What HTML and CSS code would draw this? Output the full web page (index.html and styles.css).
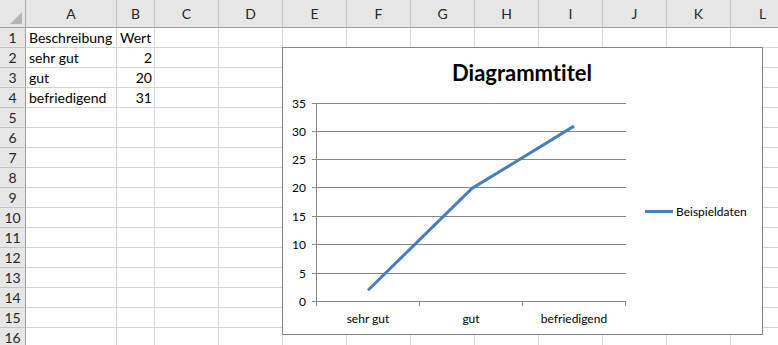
FILE: index.html
```html
<!DOCTYPE html>
<html lang="de">
<head>
  <meta charset="UTF-8">
  <title>Mappe1 - Diagramm</title>
  <link rel="stylesheet" href="styles.css">
</head>
<body>

  <div class="sheet">
    <div class="grid">
      <!-- column headers -->
      <div class="corner"><span class="corner-mark"></span></div>
      <div class="col-head">A</div><div class="col-head">B</div><div class="col-head">C</div><div class="col-head">D</div><div class="col-head">E</div><div class="col-head">F</div><div class="col-head">G</div><div class="col-head">H</div><div class="col-head">I</div><div class="col-head">J</div><div class="col-head">K</div><div class="col-head">L</div>

      <!-- data rows -->
      <div class="row-head">1</div><div class="cell">Beschreibung</div><div class="cell">Wert</div><div class="cell"></div><div class="cell"></div><div class="cell"></div><div class="cell"></div><div class="cell"></div><div class="cell"></div><div class="cell"></div><div class="cell"></div><div class="cell"></div><div class="cell"></div>
      <div class="row-head">2</div><div class="cell">sehr gut</div><div class="cell num">2</div><div class="cell"></div><div class="cell"></div><div class="cell"></div><div class="cell"></div><div class="cell"></div><div class="cell"></div><div class="cell"></div><div class="cell"></div><div class="cell"></div><div class="cell"></div>
      <div class="row-head">3</div><div class="cell">gut</div><div class="cell num">20</div><div class="cell"></div><div class="cell"></div><div class="cell"></div><div class="cell"></div><div class="cell"></div><div class="cell"></div><div class="cell"></div><div class="cell"></div><div class="cell"></div><div class="cell"></div>
      <div class="row-head">4</div><div class="cell">befriedigend</div><div class="cell num">31</div><div class="cell"></div><div class="cell"></div><div class="cell"></div><div class="cell"></div><div class="cell"></div><div class="cell"></div><div class="cell"></div><div class="cell"></div><div class="cell"></div><div class="cell"></div>
      <div class="row-head">5</div><div class="cell"></div><div class="cell"></div><div class="cell"></div><div class="cell"></div><div class="cell"></div><div class="cell"></div><div class="cell"></div><div class="cell"></div><div class="cell"></div><div class="cell"></div><div class="cell"></div><div class="cell"></div>
      <div class="row-head">6</div><div class="cell"></div><div class="cell"></div><div class="cell"></div><div class="cell"></div><div class="cell"></div><div class="cell"></div><div class="cell"></div><div class="cell"></div><div class="cell"></div><div class="cell"></div><div class="cell"></div><div class="cell"></div>
      <div class="row-head">7</div><div class="cell"></div><div class="cell"></div><div class="cell"></div><div class="cell"></div><div class="cell"></div><div class="cell"></div><div class="cell"></div><div class="cell"></div><div class="cell"></div><div class="cell"></div><div class="cell"></div><div class="cell"></div>
      <div class="row-head">8</div><div class="cell"></div><div class="cell"></div><div class="cell"></div><div class="cell"></div><div class="cell"></div><div class="cell"></div><div class="cell"></div><div class="cell"></div><div class="cell"></div><div class="cell"></div><div class="cell"></div><div class="cell"></div>
      <div class="row-head">9</div><div class="cell"></div><div class="cell"></div><div class="cell"></div><div class="cell"></div><div class="cell"></div><div class="cell"></div><div class="cell"></div><div class="cell"></div><div class="cell"></div><div class="cell"></div><div class="cell"></div><div class="cell"></div>
      <div class="row-head">10</div><div class="cell"></div><div class="cell"></div><div class="cell"></div><div class="cell"></div><div class="cell"></div><div class="cell"></div><div class="cell"></div><div class="cell"></div><div class="cell"></div><div class="cell"></div><div class="cell"></div><div class="cell"></div>
      <div class="row-head">11</div><div class="cell"></div><div class="cell"></div><div class="cell"></div><div class="cell"></div><div class="cell"></div><div class="cell"></div><div class="cell"></div><div class="cell"></div><div class="cell"></div><div class="cell"></div><div class="cell"></div><div class="cell"></div>
      <div class="row-head">12</div><div class="cell"></div><div class="cell"></div><div class="cell"></div><div class="cell"></div><div class="cell"></div><div class="cell"></div><div class="cell"></div><div class="cell"></div><div class="cell"></div><div class="cell"></div><div class="cell"></div><div class="cell"></div>
      <div class="row-head">13</div><div class="cell"></div><div class="cell"></div><div class="cell"></div><div class="cell"></div><div class="cell"></div><div class="cell"></div><div class="cell"></div><div class="cell"></div><div class="cell"></div><div class="cell"></div><div class="cell"></div><div class="cell"></div>
      <div class="row-head">14</div><div class="cell"></div><div class="cell"></div><div class="cell"></div><div class="cell"></div><div class="cell"></div><div class="cell"></div><div class="cell"></div><div class="cell"></div><div class="cell"></div><div class="cell"></div><div class="cell"></div><div class="cell"></div>
      <div class="row-head">15</div><div class="cell"></div><div class="cell"></div><div class="cell"></div><div class="cell"></div><div class="cell"></div><div class="cell"></div><div class="cell"></div><div class="cell"></div><div class="cell"></div><div class="cell"></div><div class="cell"></div><div class="cell"></div>
      <div class="row-head">16</div><div class="cell"></div><div class="cell"></div><div class="cell"></div><div class="cell"></div><div class="cell"></div><div class="cell"></div><div class="cell"></div><div class="cell"></div><div class="cell"></div><div class="cell"></div><div class="cell"></div><div class="cell"></div>
    </div>

    <!-- chart object floating over the sheet -->
    <div class="chart">
      <svg class="chart-svg" width="479" height="286" viewBox="283 48 479 286">
        <text class="chart-title" x="522" y="80.5">Diagrammtitel</text>

        <!-- horizontal gridlines -->
        <g class="gridlines">
          <line x1="312" y1="103.5" x2="626" y2="103.5"/>
          <line x1="312" y1="131.5" x2="626" y2="131.5"/>
          <line x1="312" y1="159.5" x2="626" y2="159.5"/>
          <line x1="312" y1="187.5" x2="626" y2="187.5"/>
          <line x1="312" y1="216.5" x2="626" y2="216.5"/>
          <line x1="312" y1="244.5" x2="626" y2="244.5"/>
          <line x1="312" y1="273.5" x2="626" y2="273.5"/>
          <line x1="312" y1="301.5" x2="626" y2="301.5"/>
          <!-- axes and ticks -->
          <line x1="316.5" y1="103" x2="316.5" y2="306"/>
          <line x1="419.5" y1="301" x2="419.5" y2="306"/>
          <line x1="522.5" y1="301" x2="522.5" y2="306"/>
          <line x1="625.5" y1="301" x2="625.5" y2="306"/>
        </g>

        <g class="axis-labels y-labels">
          <text x="306" y="107.5">35</text>
          <text x="306" y="135.5">30</text>
          <text x="306" y="163.5">25</text>
          <text x="306" y="191.5">20</text>
          <text x="306" y="220.5">15</text>
          <text x="306" y="248.5">10</text>
          <text x="306" y="277.5">5</text>
          <text x="306" y="305.5">0</text>
        </g>

        <g class="axis-labels x-labels">
          <text x="368" y="323">sehr gut</text>
          <text x="471" y="323">gut</text>
          <text x="574" y="323">befriedigend</text>
        </g>

        <polyline class="series" points="368,290.2 472,188.4 574,126.1"/>

        <!-- legend -->
        <line class="series" x1="645" y1="211.5" x2="673" y2="211.5"/>
        <text class="legend-label" x="676" y="216">Beispieldaten</text>
      </svg>
    </div>
  </div>

</body>
</html>
```

FILE: styles.css
```css
body {
  margin: 0;
  background-color: #fff;
  font-family: Lato, "Liberation Sans", sans-serif;
  font-variant-ligatures: none;
  overflow: hidden;
}

.sheet {
  position: relative;
  width: 778px;
  height: 345px;
  overflow: hidden;
}

.grid {
  display: grid;
  grid-template-columns: 26px 91px 38px repeat(10, 64px);
  grid-template-rows: 28px;
  grid-auto-rows: 20px;
  width: max-content;
}

.grid > div {
  box-sizing: border-box;
}

/* headers */
.corner {
  display: flex;
  justify-content: flex-end;
  align-items: flex-end;
  padding: 0 3px 3px 0;
  background-color: #e6e6e6;
  border-right: 1px solid #ababab;
  border-bottom: 1px solid #9f9f9f;
}

.corner-mark {
  width: 12px;
  height: 12px;
  background-color: #b5b5b5;
  clip-path: polygon(100% 0, 100% 100%, 0 100%);
}

.col-head {
  display: flex;
  justify-content: center;
  align-items: flex-end;
  padding-bottom: 5px;
  background-color: #e6e6e6;
  border-right: 1px solid #c3c3c3;
  border-bottom: 1px solid #9f9f9f;
  font-size: 14px;
  color: #262626;
}

.row-head {
  display: flex;
  justify-content: center;
  align-items: center;
  background-color: #e6e6e6;
  border-right: 1px solid #9f9f9f;
  border-bottom: 1px solid #c3c3c3;
  font-size: 14px;
  color: #262626;
}

/* cells */
.cell {
  padding: 0 3px;
  border-right: 1px solid #d4d4d4;
  border-bottom: 1px solid #d4d4d4;
  font-size: 14px;
  line-height: 19px;
  color: #000;
  white-space: nowrap;
  overflow: hidden;
}

.cell.num {
  text-align: right;
  padding-right: 2px;
}

/* chart object */
.chart {
  position: absolute;
  top: 47px;
  left: 282px;
  width: 481px;
  height: 288px;
  box-sizing: border-box;
  border: 1px solid #868686;
  background-color: #fff;
}

.chart-svg {
  display: block;
  font-family: Lato, "Liberation Sans", sans-serif;
}

.chart-title {
  font-size: 22px;
  font-weight: bold;
  text-anchor: middle;
  fill: #000;
}

.gridlines line {
  stroke: #868686;
  stroke-width: 1;
}

.axis-labels text,
.legend-label {
  font-size: 12px;
  fill: #000;
}

.y-labels text {
  text-anchor: end;
}

.x-labels text {
  text-anchor: middle;
}

.series {
  fill: none;
  stroke: #4a7ebb;
  stroke-width: 3;
  stroke-linejoin: round;
}
```
